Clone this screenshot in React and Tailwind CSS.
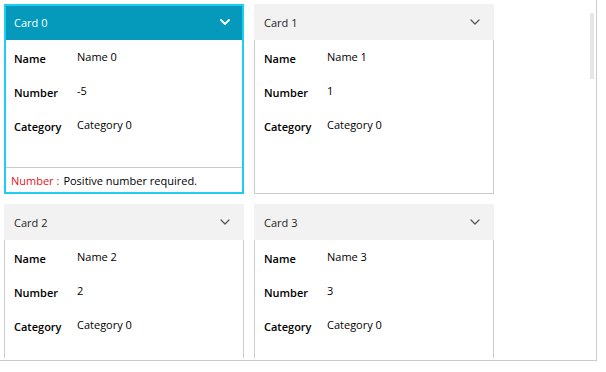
import React from "react";

const cards = [
  { id: 0, name: "Name 0", number: "-5", category: "Category 0", focused: true },
  { id: 1, name: "Name 1", number: "1", category: "Category 0" },
  { id: 2, name: "Name 2", number: "2", category: "Category 0" },
  { id: 3, name: "Name 3", number: "3", category: "Category 0" },
];

function Chevron({ focused }) {
  return (
    <svg width="10" height="6" viewBox="0 0 10 6" className="block">
      <path
        d="M1 1 L5 5 L9 1"
        fill="none"
        stroke={focused ? "#ffffff" : "#555555"}
        strokeWidth={focused ? 1.8 : 1.2}
        strokeLinecap="round"
        strokeLinejoin="round"
      />
    </svg>
  );
}

function Row({ label, value }) {
  return (
    <div className="flex h-[34px] items-start">
      <div className="w-[63px] pt-[2px] font-semibold text-black">{label}</div>
      <div className="text-black">{value}</div>
    </div>
  );
}

function Card({ card }) {
  const f = card.focused;
  return (
    <div className="relative flex h-[190px] w-[240px] flex-col">
      <div
        className={
          "flex h-[36px] shrink-0 items-center justify-between pl-[10px] pr-[14px] " +
          (f ? "bg-[#0599bb] text-white" : "bg-[#f2f2f2] text-[#1f1f1f]")
        }
      >
        <span>Card {card.id}</span>
        <Chevron focused={f} />
      </div>
      <div className="flex flex-1 flex-col border-x border-b border-[#cccccc] bg-white">
        <div className="pl-[9px] pt-[9px]">
          <Row label="Name" value={card.name} />
          <Row label="Number" value={card.number} />
          <Row label="Category" value={card.category} />
        </div>
        {f && (
          <div className="mt-auto flex h-[26px] items-center border-t border-[#cccccc] pl-[6px]">
            <span className="text-[#e81123]">Number :</span>
            <span className="ml-[4px] text-black">Positive number required.</span>
          </div>
        )}
      </div>
      {f && (
        <div className="pointer-events-none absolute inset-0 border-2 border-[#1ecdf4]" />
      )}
    </div>
  );
}

export default function App() {
  return (
    <div
      className="relative h-[361px] w-[597px] border-b border-r border-[#cccccc] bg-white text-[11px] leading-[15px]"
      style={{ fontFamily: '"Open Sans", "Noto Sans", sans-serif' }}
    >
      <div className="h-[358px] overflow-hidden">
        <div className="grid grid-cols-[240px_240px] gap-x-[10px] gap-y-[10px] pl-[4px] pt-[4px]">
          {cards.map((c) => (
            <Card key={c.id} card={c} />
          ))}
        </div>
      </div>
      <div className="absolute left-[590px] top-[13px] h-[66px] w-[4px] bg-[#e6e6e6]" />
    </div>
  );
}
